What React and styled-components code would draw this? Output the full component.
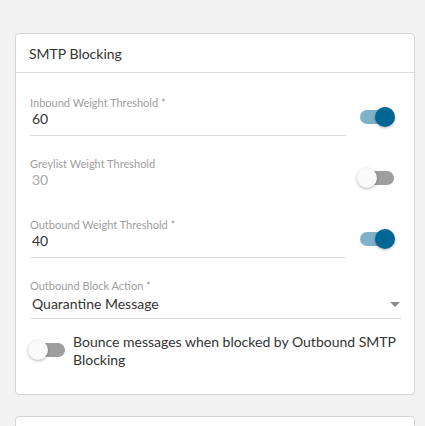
import styled, { createGlobalStyle } from "styled-components";

const GlobalStyle = createGlobalStyle`
  html, body {
    margin: 0;
    padding: 0;
    background: #f2f2f2;
    font-family: "Lato", "Open Sans", sans-serif;
  }
`;

const fields = [
  { label: "Inbound Weight Threshold *", value: "60", on: true },
  { label: "Greylist Weight Threshold", value: "30", on: false, disabled: true },
  { label: "Outbound Weight Threshold *", value: "40", on: true },
];

const Toggle = ({ on }) => (
  <Switch>
    <Track $on={on} />
    <Thumb $on={on} />
  </Switch>
);

const App = () => {
  return (
    <Page>
      <GlobalStyle />
      <Card>
        <CardHeader>SMTP Blocking</CardHeader>
        <CardBody>
          {fields.map((f) => (
            <FieldRow key={f.label}>
              <Field>
                <Label>{f.label}</Label>
                <Value $disabled={f.disabled}>{f.value}</Value>
              </Field>
              <ToggleCell>
                <Toggle on={f.on} />
              </ToggleCell>
            </FieldRow>
          ))}
          <SelectField>
            <Label>Outbound Block Action *</Label>
            <SelectValue>
              Quarantine Message
              <Caret />
            </SelectValue>
          </SelectField>
          <CheckRow>
            <CheckToggle>
              <Toggle on={false} />
            </CheckToggle>
            <CheckText>Bounce messages when blocked by Outbound SMTP Blocking</CheckText>
          </CheckRow>
        </CardBody>
      </Card>
      <Card $short />
    </Page>
  );
};

const Page = styled.div`
  display: flex;
  flex-direction: column;
  gap: 21px;
  padding: 33px 10px 0 15px;
  height: 426px;
  box-sizing: border-box;
  overflow: hidden;
`;

const Card = styled.div`
  background: #fff;
  border: 1px solid #d4d4d4;
  border-radius: 4px;
  flex-shrink: 0;
  min-height: ${(props) => (props.$short ? "40px" : "auto")};
`;

const CardHeader = styled.div`
  height: 38px;
  display: flex;
  align-items: center;
  padding-left: 13px;
  font-size: 14px;
  color: #333;
  border-bottom: 1px solid #dcdcdc;
`;

const CardBody = styled.div`
  padding: 24px 13px 25px 14px;
  display: flex;
  flex-direction: column;
`;

const FieldRow = styled.div`
  display: flex;
  align-items: center;
  margin-bottom: 22px;
  padding-right: 7px;
`;

const Field = styled.div`
  width: 316px;
  display: flex;
  flex-direction: column;
`;

const Label = styled.div`
  font-size: 11px;
  line-height: 12px;
  color: #9e9e9e;
`;

const Value = styled.div`
  font-size: 14px;
  line-height: 20px;
  padding: 0 2px 6px;
  color: ${(props) => (props.$disabled ? "#a8a8a8" : "#333")};
  border-bottom: 1px solid ${(props) => (props.$disabled ? "transparent" : "#dcdcdc")};
`;

const ToggleCell = styled.div`
  flex: 1;
  display: flex;
  justify-content: flex-end;
`;

const Switch = styled.div`
  position: relative;
  width: 34px;
  height: 20px;
  flex-shrink: 0;
`;

const Track = styled.div`
  position: absolute;
  left: 0;
  top: 3px;
  width: 34px;
  height: 14px;
  border-radius: 7px;
  background: ${(props) => (props.$on ? "#7fb2c9" : "#9e9e9e")};
`;

const Thumb = styled.div`
  position: absolute;
  top: 0;
  left: ${(props) => (props.$on ? "15px" : "-3px")};
  width: 20px;
  height: 20px;
  border-radius: 50%;
  background: ${(props) => (props.$on ? "#006694" : "#fafafa")};
  box-shadow: 0 1px 3px rgba(0, 0, 0, 0.3);
`;

const SelectField = styled.div`
  display: flex;
  flex-direction: column;
`;

const SelectValue = styled.div`
  display: flex;
  align-items: center;
  justify-content: space-between;
  font-size: 14px;
  line-height: 20px;
  padding: 2px 1px 4px 2px;
  color: #333;
  border-bottom: 1px solid #dcdcdc;
`;

const Caret = styled.span`
  width: 0;
  height: 0;
  border-left: 5px solid transparent;
  border-right: 5px solid transparent;
  border-top: 5px solid #8a8a8a;
`;

const CheckRow = styled.div`
  display: flex;
  align-items: flex-start;
  gap: 8px;
  margin-top: 14px;
  padding-left: 1px;
`;

const CheckToggle = styled.div`
  margin-top: 7px;
`;

const CheckText = styled.div`
  font-size: 14px;
  line-height: 18px;
  color: #333;
`;

export default App;
